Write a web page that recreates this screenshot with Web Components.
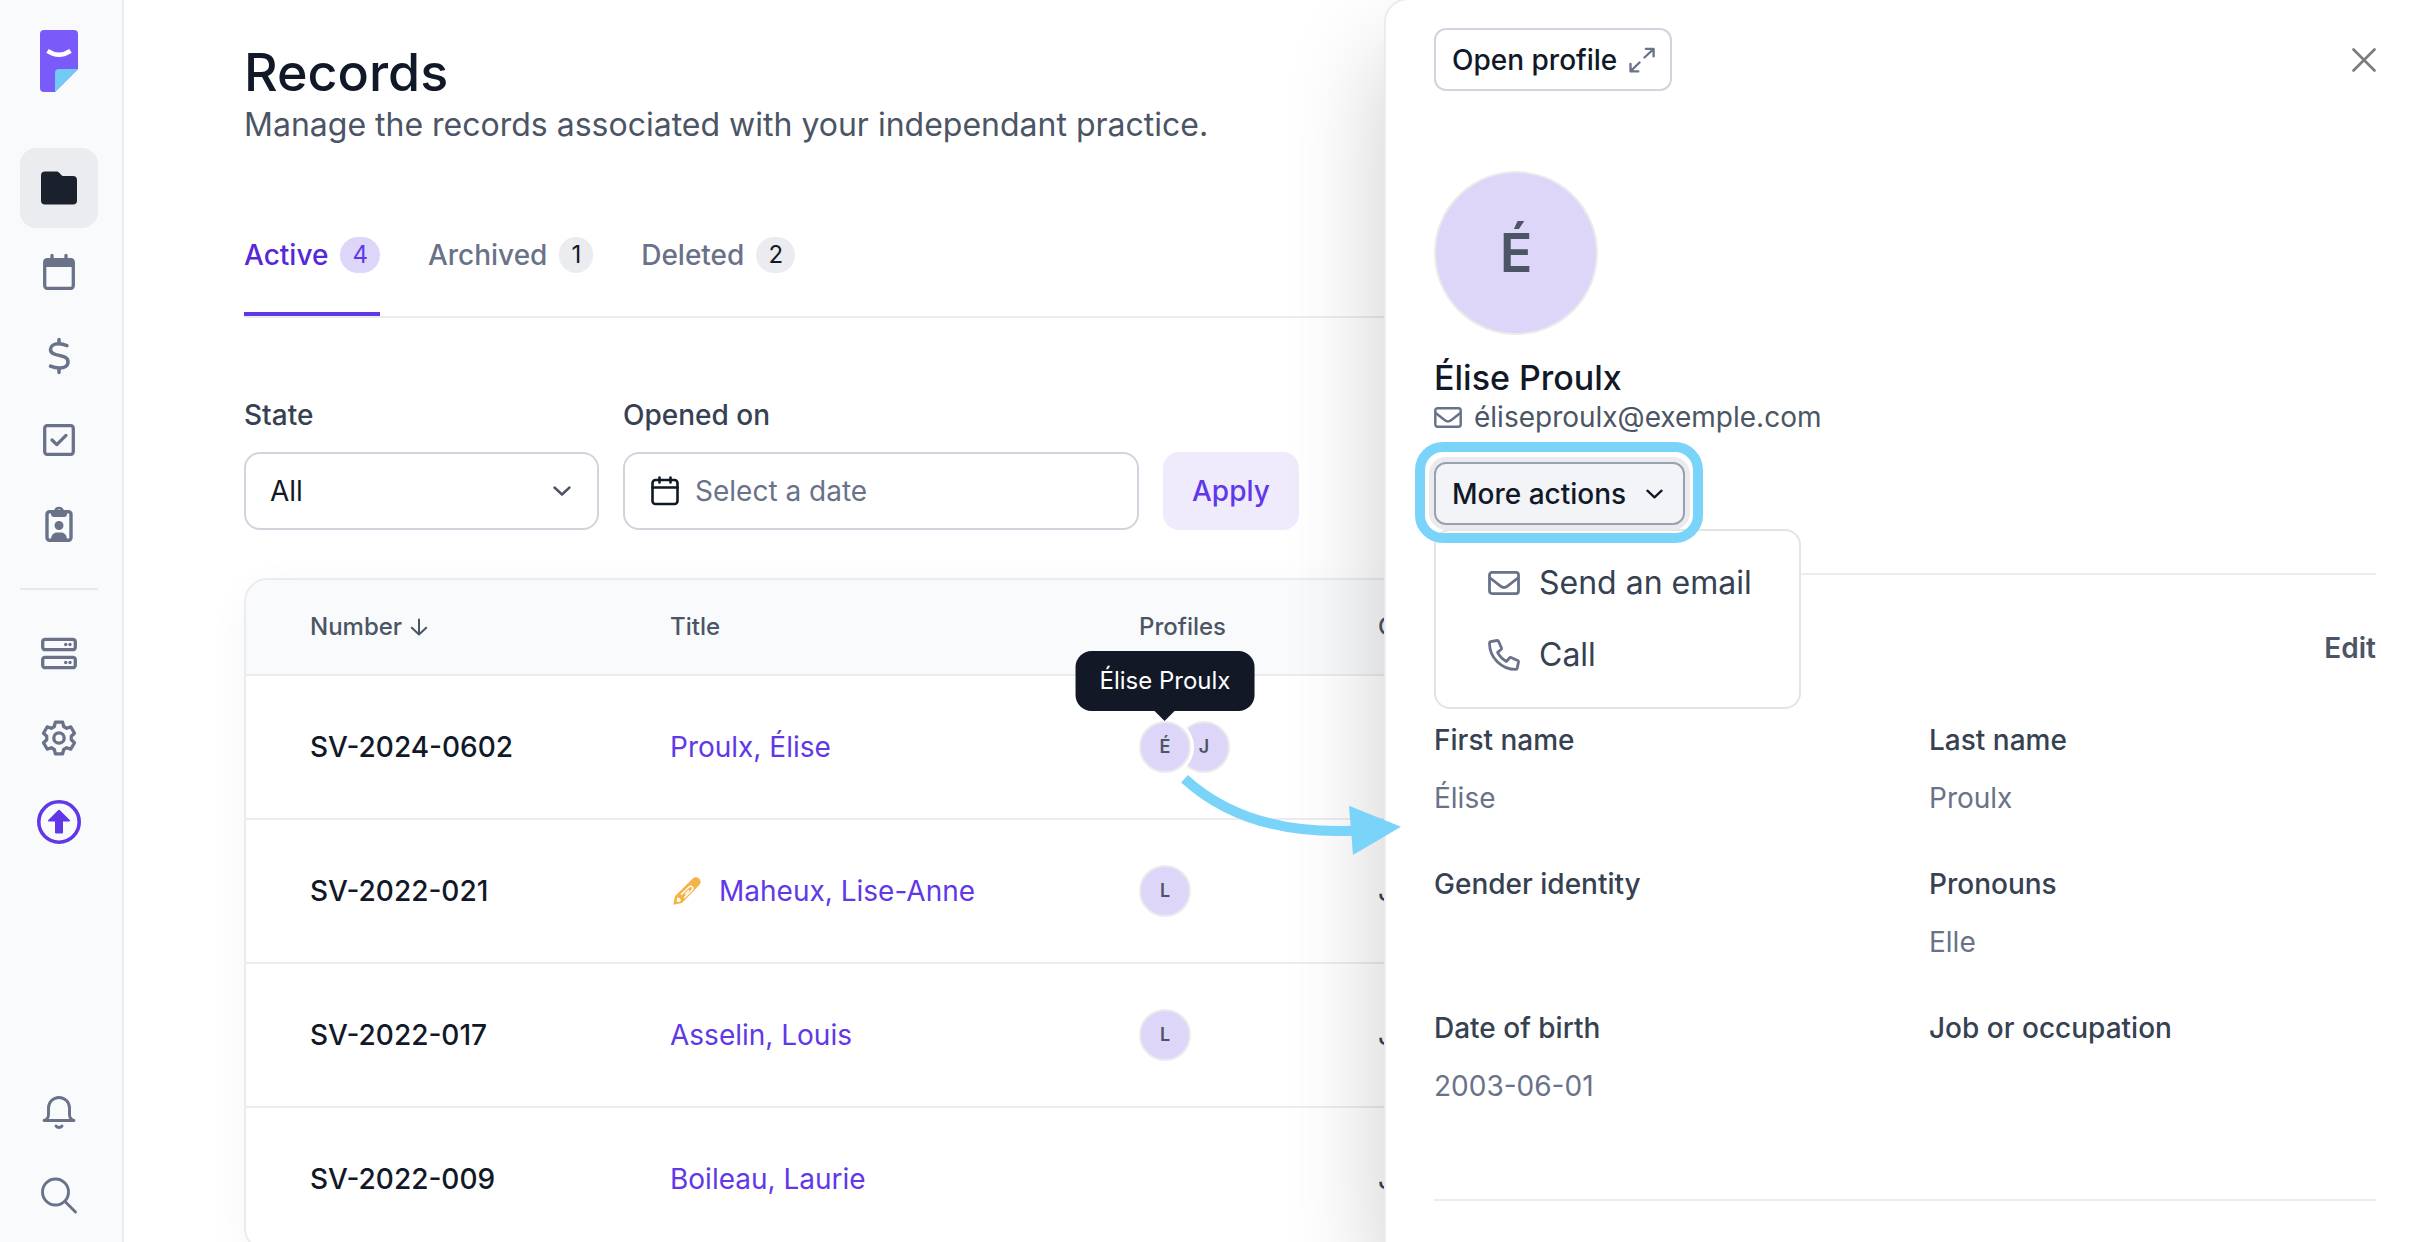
<!DOCTYPE html>
<html lang="en">
<head>
<meta charset="utf-8">
<title>Records</title>
<style>
  :root {
    --ink: #111827; --ink-2: #364152; --text: #4b5565; --muted: #697289;
    --brand: #6038e8; --brand-deep: #5528d8; --lilac: #ded6f9; --lilac-soft: #efebfc;
    --line: #ebebf0; --field: #d0d5dd; --surface: #f9fafc; --sky: #7ad3f9;
  }
  html, body { margin: 0; height: 100%; }
  body { font: 400 28px/40px Inter, "Liberation Sans", sans-serif; color: var(--ink); background: #fff; overflow: hidden; }
</style>
</head>
<body>
<app-shell>
  <side-nav slot="nav"></side-nav>
  <records-page></records-page>
  <profile-drawer slot="drawer"></profile-drawer>
  <callout-arrow slot="callout"></callout-arrow>
</app-shell>

<script>
const gear = (() => {
  const at = (deg, r) => {
    const a = (deg - 90) * Math.PI / 180;
    return (20 + r * Math.cos(a)).toFixed(2) + ' ' + (20 + r * Math.sin(a)).toFixed(2);
  };
  let pts = [];
  for (let k = 0; k < 6; k++) {
    const a = k * 60;
    pts.push(at(a - 22, 12.4), at(a - 13, 16.2), at(a + 13, 16.2), at(a + 22, 12.4));
  }
  return 'M' + pts.join('L') + 'Z';
})();

/* Each icon: [viewBox, markup] */
const ICONS = {
  logo: ['0 0 38 62', '<path fill="#7a5af8" d="M4 0h30a4 4 0 0 1 4 4v35L15 62H4a4 4 0 0 1-4-4V4a4 4 0 0 1 4-4z"/><path fill="#70caf5" d="M15 62V43a4 4 0 0 1 4-4h19z"/><path fill="none" stroke="#fff" stroke-width="4.4" d="M7.500 20.800Q19 28.500 30.500 20.800"/>'],
  folder: ['0 0 40 40', '<path fill="#1a202c" d="M6 3.500h11.500c1.400 0 2.200.6 3 1.500l1.500 1.700c.8.900 1.500 1.300 2.700 1.300H34a4 4 0 0 1 4 4v20.500a4 4 0 0 1-4 4H6a4 4 0 0 1-4-4v-25a4 4 0 0 1 4-4z"/>'],
  calendar: ['0 0 40 40', '<g fill="none" stroke="currentColor" stroke-width="3.300" stroke-linecap="round"><rect x="5.700" y="7.700" width="28.600" height="28.600" rx="2.500"/><path d="M13 3.500v4M27 3.500v4"/></g><path fill="currentColor" d="M5 7h30v8H5z"/>'],
  dollar: ['0 0 40 40', '<g fill="none" stroke="currentColor" stroke-width="3.500" stroke-linecap="round"><path d="M20 3.500v4M20 32.500v4"/><path d="M28 9.600C25 8.400 22 7.800 19.500 7.800c-5 0-8 2.200-8 5.600 0 4 4 5 8.500 6s9 2 9 6.600c0 4-3.600 6-8.500 6-3.500 0-6.500-.8-9-1.900"/></g>'],
  check: ['0 0 40 40', '<g fill="none" stroke="currentColor" stroke-width="3.300" stroke-linecap="round" stroke-linejoin="round"><rect x="5.700" y="5.700" width="28.600" height="28.600" rx="2.500"/><path d="M13 20l4.800 4.600 9.200-9.200"/></g>'],
  clipboard: ['0 0 40 40', '<rect x="8" y="7.700" width="24" height="28.600" rx="2.500" fill="none" stroke="currentColor" stroke-width="3.400"/><path fill="currentColor" fill-rule="evenodd" d="M12 6h3.200a5.200 5.200 0 0 1 9.600 0H28v4a3 3 0 0 1-3 3H15a3 3 0 0 1-3-3zM20 5.200a1.800 1.800 0 1 0 0 3.600 1.800 1.800 0 0 0 0-3.600zM20 17a4.500 4.500 0 1 1 0 9 4.500 4.500 0 0 1 0-9zM12 35.500c0-4.500 3-7 6-7h4c3 0 6 2.500 6 7z"/>'],
  server: ['0 0 40 40', '<g fill="none" stroke="currentColor" stroke-width="3.300"><rect x="3.700" y="5.300" width="32.600" height="10.400" rx="2.500"/><rect x="3.700" y="23.300" width="32.600" height="10.400" rx="2.500"/></g><g fill="currentColor"><circle cx="26.700" cy="10.500" r="1.700"/><circle cx="31" cy="10.500" r="1.700"/><circle cx="26.700" cy="28.500" r="1.700"/><circle cx="31" cy="28.500" r="1.700"/></g>'],
  gear: ['0 0 40 40', `<g fill="none" stroke="currentColor" stroke-width="3.300" stroke-linejoin="round"><path d="${gear}"/><circle cx="20" cy="20" r="5.200"/></g>`],
  upgrade: ['0 0 44 44', '<circle cx="22" cy="22" r="20.200" fill="none" stroke="#6038e8" stroke-width="3.600"/><path fill="#6038e8" stroke="#6038e8" stroke-width="2" stroke-linejoin="round" d="M22 10.800L32 20.600H25V32.400H19V20.600H12z"/>'],
  bell: ['0 0 40 40', '<g fill="none" stroke="currentColor" stroke-width="2.900" stroke-linecap="round" stroke-linejoin="round"><path d="M5 28.500C8.500 27.500 9.500 25.500 9.500 22.500V16a10.500 10.500 0 0 1 21 0v6.500c0 3 1 5 4.500 6z"/><path d="M17 34c1.600 2 4.400 2 6 0"/></g>'],
  search: ['0 0 40 40', '<g fill="none" stroke="currentColor" stroke-width="2.900" stroke-linecap="round"><circle cx="16.500" cy="16" r="13"/><path d="M26 25.500l10.500 10.500"/></g>'],
  chevron: ['0 0 18 10', '<path fill="none" stroke="currentColor" stroke-width="2.400" stroke-linecap="round" stroke-linejoin="round" d="M1.500 1.500L9 8.500l7.500-7"/>'],
  date: ['0 0 28 30', '<g fill="none" stroke="currentColor" stroke-width="2.600" stroke-linecap="round" stroke-linejoin="round"><rect x="1.500" y="4" width="25" height="24" rx="3"/><path d="M1.500 11.500h25M8.500 1.500v5M19.500 1.500v5"/></g>'],
  sort: ['0 0 18 18', '<path fill="none" stroke="currentColor" stroke-width="2" stroke-linecap="round" stroke-linejoin="round" d="M9 1.500v15M1.800 9.800L9 16.500l7.200-6.700"/>'],
  pencil: ['0 0 28 28', '<path fill="#f3b345" d="M.3 27.700L2 19 19.800 1.600c2-2 4.400-1.700 6.200 0 2 1.900 2.200 4.500.3 6.500L9 26z"/><path fill="#fff" d="M4.300 20.200l-.8 4.200 2.500.6 2-1.200-1-2.300z"/><path fill="none" stroke="#fff" stroke-width="1.500" stroke-linejoin="round" stroke-linecap="round" d="M11.500 20.500l7.300-7.200c1.300-1.300 1.300-2.600.4-3.500s-2.200-.9-3.500.4L8.500 17.300M12.600 16.700l3-3"/>'],
  expand: ['0 0 26 26', '<path fill="none" stroke="currentColor" stroke-width="2.300" stroke-linecap="round" stroke-linejoin="round" d="M15.500 10.500L24.500 2M16.800 1.800h7.800v7.600M10.500 15.500L1.800 24M1.500 16.800v7.600h7.800"/>'],
  close: ['0 0 24 24', '<path fill="none" stroke="#7b7b7b" stroke-width="2.600" stroke-linecap="round" d="M1.500 1.500l21 21M22.500 1.500l-21 21"/>'],
  mail: ['0 0 32 24', '<g fill="none" stroke="currentColor" stroke-width="2.800" stroke-linejoin="round"><rect x="1.500" y="1.400" width="29" height="21.200" rx="2.500"/><path d="M1.500 6.500l11 8.600c2.200 1.700 4.800 1.700 7 0l11-8.600"/></g>'],
  phone: ['0 0 32 32', '<path fill="none" stroke="currentColor" stroke-width="2.800" stroke-linejoin="round" d="M1.500 4.200c0-.8.400-1.300 1.100-1.500L9 1.500c.7-.1 1.200.1 1.500.8l3 6.700c.2.600.1 1.100-.4 1.500L9.600 13.400c2 4 5 7 9 9l2.900-3.500c.4-.5.9-.6 1.500-.4l6.700 3c.7.3.9.8.8 1.500l-1.300 6.300c-.2.700-.7 1.100-1.400 1.100C13.500 30.400 1.500 18.500 1.500 4.200z"/>']
};

function define(name, html) {
  customElements.define(name, class extends HTMLElement {
    constructor() { super(); this.attachShadow({ mode: 'open' }); }
    connectedCallback() {
      this.shadowRoot.innerHTML = typeof html === 'function' ? html(this) : html;
    }
  });
}

define('ui-icon', el => {
  const [box, markup] = ICONS[el.getAttribute('name')];
  return `<style>:host{display:inline-flex;flex:none}svg{display:block;width:var(--w,40px);height:var(--h,40px)}</style>
  <svg viewBox="${box}" aria-hidden="true">${markup}</svg>`;
});

define('app-shell', `<style>
  :host{display:flex;position:relative;height:100vh;overflow:hidden}
  main{flex:1;min-width:0}
</style><slot name="nav"></slot><main><slot></slot></main><slot name="drawer"></slot><slot name="callout"></slot>`);

define('nav-item', el => `<style>
  :host{display:block}
  a{display:flex;align-items:center;justify-content:center;height:80px;border-radius:16px;color:var(--muted);text-decoration:none}
  :host([active]) a{background:#ebecf0}
</style><a href="#" aria-label="${el.getAttribute('label')}"><slot></slot></a>`);

define('side-nav', `<style>
  :host{display:flex;flex-direction:column;flex:none;box-sizing:border-box;width:124px;padding:30px 24px 6px 20px;background:var(--surface);border-right:2px solid var(--line)}
  .logo{display:flex;justify-content:center;--w:38px;--h:62px;margin-bottom:56px}
  nav{display:flex;flex-direction:column;gap:4px}
  hr{width:100%;height:2px;border:0;margin:20px 0;background:#e8e9ed}
  .end{margin-top:auto}
  .up{--w:44px;--h:44px}
</style>
<a class="logo" href="#" aria-label="Home"><ui-icon name="logo"></ui-icon></a>
<nav aria-label="Main">
  <nav-item active label="Records"><ui-icon name="folder"></ui-icon></nav-item>
  <nav-item label="Calendar"><ui-icon name="calendar"></ui-icon></nav-item>
  <nav-item label="Billing"><ui-icon name="dollar"></ui-icon></nav-item>
  <nav-item label="Tasks"><ui-icon name="check"></ui-icon></nav-item>
  <nav-item label="Clients"><ui-icon name="clipboard"></ui-icon></nav-item>
  <hr>
  <nav-item label="Services"><ui-icon name="server"></ui-icon></nav-item>
  <nav-item label="Settings"><ui-icon name="gear"></ui-icon></nav-item>
  <nav-item label="Upgrade"><ui-icon class="up" name="upgrade"></ui-icon></nav-item>
</nav>
<nav class="end" aria-label="Tools">
  <nav-item label="Notifications"><ui-icon name="bell"></ui-icon></nav-item>
  <nav-item label="Search"><ui-icon name="search"></ui-icon></nav-item>
</nav>`);

define('tab-item', el => `<style>
  :host{display:block}
  button{all:unset;display:flex;align-items:center;gap:12px;padding-bottom:39px;border-bottom:4px solid transparent;font-weight:500;line-height:36px;color:var(--muted);cursor:pointer}
  span{padding:0 12px;border-radius:18px;background:#ebecf0;color:var(--ink);font-size:24px;font-weight:400}
  :host([active]) button{color:var(--brand-deep);border-color:var(--brand)}
  :host([active]) span{background:var(--lilac);color:var(--brand)}
</style><button role="tab" aria-selected="${el.hasAttribute('active')}"><slot></slot><span>${el.getAttribute('count')}</span></button>`);

define('filter-bar', `<style>
  :host{display:flex;align-items:flex-end;gap:24px}
  .field{display:flex;flex-direction:column;gap:17px}
  .state{width:355px}.date{width:516px}
  label{font-weight:500;color:var(--ink-2)}
  .box{display:flex;align-items:center;gap:16px;box-sizing:border-box;height:78px;padding:0 26px 0 24px;border:2px solid var(--field);border-radius:16px;background:#fff}
  .date .box{padding-left:26px}
  select,input{flex:1;min-width:0;height:100%;padding:0;border:0;outline:0;background:none;appearance:none;font:inherit;color:var(--ink)}
  input::placeholder{color:var(--muted);opacity:1}
  .chev{--w:18px;--h:10px;color:var(--text)}
  .cal{--w:28px;--h:30px}
  button{height:78px;padding:0 29px;border:0;border-radius:16px;background:var(--lilac-soft);color:var(--brand);font:inherit;font-weight:500}
</style>
<div class="field state"><label for="state">State</label>
  <div class="box"><select id="state"><option>All</option></select><ui-icon class="chev" name="chevron"></ui-icon></div></div>
<div class="field date"><label for="opened">Opened on</label>
  <div class="box"><ui-icon class="cal" name="date"></ui-icon><input id="opened" type="text" placeholder="Select a date"></div></div>
<button type="button">Apply</button>`);

define('user-avatar', `<style>
  :host{display:inline-flex;position:relative;align-items:center;justify-content:center;box-sizing:border-box;width:52px;height:52px;border:2px solid #ebebeb;border-radius:50%;background:var(--lilac);color:var(--text);font-size:18px;font-weight:600;line-height:1}
  :host([large]){width:164px;height:164px;font-size:54px}
</style><slot></slot><slot name="tip"></slot>`);

define('tool-tip', `<style>
  :host{position:absolute;left:50%;bottom:calc(100% + 12px);transform:translateX(-50%);padding:12px 24px;border-radius:16px;background:#131827;color:#fff;font-size:24px;font-weight:400;line-height:36px;white-space:nowrap}
  :host::after{content:"";position:absolute;left:50%;top:100%;margin-left:-10px;border:10px solid transparent;border-bottom:0;border-top-color:#131827}
</style><slot></slot>`);

define('records-table', `<style>
  :host{display:block;border:2px solid var(--line);border-radius:24px;background:#fff;box-shadow:0 10px 40px rgba(0,0,0,.04)}
  table{width:100%;table-layout:fixed;border-collapse:separate;border-spacing:0;text-align:left}
  .c1{width:392px}.c2{width:469px}.c3{width:239px}
  th,td{padding:0 0 0 32px;border-bottom:2px solid var(--line);white-space:nowrap}
  th:first-child,td:first-child{padding-left:64px}
  thead th{height:94px;background:var(--surface);font-size:24px;font-weight:500;color:var(--text)}
  thead th:first-child{border-top-left-radius:22px}
  thead th:last-child{border-top-right-radius:22px}
  tbody th,tbody td{height:142px;font-weight:400}
  tbody th{font-weight:500}
  tbody tr:last-child>*{border-bottom:0}
  .row{display:flex;align-items:center}
  .sort{gap:8px;--w:18px;--h:18px}
  .title{gap:18px;--w:28px;--h:28px}
  .title ui-icon{margin-left:3px}
  a{color:var(--brand);text-decoration:none}
  .who{color:var(--ink-2)}
  user-avatar+user-avatar{margin-left:-13px}
  .front{z-index:1;box-shadow:0 0 0 3px #fff}
</style>
<table>
  <colgroup><col class="c1"><col class="c2"><col class="c3"><col></colgroup>
  <thead><tr><th><div class="row sort">Number <ui-icon name="sort"></ui-icon></div></th><th>Title</th><th>Profiles</th><th>C</th></tr></thead>
  <tbody>
    <tr><th>SV-2024-0602</th><td><a href="#">Proulx, Élise</a></td><td><div class="row"><user-avatar class="front">É<tool-tip slot="tip" role="tooltip">Élise Proulx</tool-tip></user-avatar><user-avatar>J</user-avatar></div></td><td></td></tr>
    <tr><th>SV-2022-021</th><td><div class="row title"><ui-icon name="pencil"></ui-icon><a href="#">Maheux, Lise-Anne</a></div></td><td><div class="row"><user-avatar>L</user-avatar></div></td><td class="who">J</td></tr>
    <tr><th>SV-2022-017</th><td><a href="#">Asselin, Louis</a></td><td><div class="row"><user-avatar>L</user-avatar></div></td><td class="who">J</td></tr>
    <tr><th>SV-2022-009</th><td><a href="#">Boileau, Laurie</a></td><td></td><td class="who">J</td></tr>
  </tbody>
</table>`);

define('records-page', `<style>
  :host{display:block;padding:40px 120px}
  h1{margin:0;font-size:52px;line-height:66px;font-weight:500}
  p{margin:0;font-size:32px;line-height:38px;color:var(--text)}
  .tabs{display:flex;gap:48px;margin:93px 0 77px;border-bottom:2px solid var(--line)}
  records-table{margin-top:48px}
</style>
<h1>Records</h1>
<p>Manage the records associated with your independant practice.</p>
<div class="tabs" role="tablist">
  <tab-item active count="4">Active</tab-item>
  <tab-item count="1">Archived</tab-item>
  <tab-item count="2">Deleted</tab-item>
</div>
<filter-bar></filter-bar>
<records-table></records-table>`);

define('outline-button', `<style>
  :host{display:inline-block}
  button{display:flex;align-items:center;gap:12px;box-sizing:border-box;height:63px;padding:0 15px 0 16px;border:2px solid var(--field);border-radius:12px;background:#fff;color:var(--ink);font:inherit;font-weight:500}
  :host([pressed]) button{gap:20px;padding-right:20px;border-color:#97a1b3;background:#f2f4f8;box-shadow:0 0 0 5px #ebebed}
</style><button type="button"><slot></slot></button>`);

define('detail-field', el => `<style>
  :host{display:flex;flex-direction:column;gap:18px}
  dt{font-weight:500;color:var(--ink-2)}
  dd{margin:0;min-height:40px;color:var(--muted)}
</style><dt>${el.getAttribute('label')}</dt><dd><slot></slot></dd>`);

define('action-menu', `<style>
  :host{display:block;position:relative;width:max-content}
  ul{position:absolute;left:0;top:calc(100% + 4px);z-index:1;box-sizing:border-box;width:367px;margin:0;padding:16px 0;border:2px solid #e4e4e5;border-radius:16px;background:#fff;list-style:none}
  li button{all:unset;display:flex;align-items:center;gap:19px;box-sizing:border-box;width:100%;height:72px;padding-left:52px;font-size:32px;color:var(--ink-2);white-space:nowrap}
  li ui-icon{color:var(--muted)}
  outline-button{display:block;position:relative;z-index:2}
  .mail{--w:32px;--h:24px}.phone{--w:32px;--h:32px}.chev{--w:17px;--h:10px}
  .halo{position:absolute;inset:-20px -18px -18px -19px;z-index:3;border:10px solid var(--sky);border-radius:28px;pointer-events:none}
</style>
<outline-button pressed>More actions<ui-icon class="chev" name="chevron"></ui-icon></outline-button>
<ul>
  <li><button type="button"><ui-icon class="mail" name="mail"></ui-icon>Send an email</button></li>
  <li><button type="button"><ui-icon class="phone" name="phone"></ui-icon>Call</button></li>
</ul>
<div class="halo"></div>`);

define('profile-drawer', `<style>
  :host{position:absolute;top:-2px;right:0;bottom:0;box-sizing:border-box;width:1030px;max-width:100%;padding:28px 38px 0 48px;border:2px solid var(--line);border-right:0;border-bottom:0;border-top-left-radius:24px;background:#fff;box-shadow:0 50px 100px rgba(0,0,0,.2)}
  header{display:flex;align-items:center;justify-content:space-between;margin-bottom:80px}
  .close{all:unset;display:flex;--w:24px;--h:24px}
  .expand{--w:26px;--h:26px;color:var(--muted)}
  user-avatar{display:flex;margin-bottom:22px}
  h2{margin:0;font-size:34px;line-height:42px;font-weight:500}
  .email{display:flex;align-items:center;gap:12px;margin-bottom:27px;line-height:36px;color:var(--text);--w:28px;--h:21px}
  .email ui-icon{color:var(--muted)}
  hr{height:2px;margin:0;border:0;background:var(--line)}
  action-menu{margin-bottom:48px}
  .edit{display:block;margin:53px 0 52px auto;width:max-content;font-weight:600;color:var(--text);text-decoration:none}
  dl{display:grid;grid-template-columns:1fr 1fr;gap:46px 48px;margin:0 0 93px}
</style>
<header>
  <outline-button>Open profile<ui-icon class="expand" name="expand"></ui-icon></outline-button>
  <button class="close" type="button" aria-label="Close"><ui-icon name="close"></ui-icon></button>
</header>
<user-avatar large>É</user-avatar>
<h2>Élise Proulx</h2>
<div class="email"><ui-icon name="mail"></ui-icon>éliseproulx@exemple.com</div>
<action-menu></action-menu>
<hr>
<a class="edit" href="#">Edit</a>
<dl>
  <detail-field label="First name">Élise</detail-field>
  <detail-field label="Last name">Proulx</detail-field>
  <detail-field label="Gender identity"></detail-field>
  <detail-field label="Pronouns">Elle</detail-field>
  <detail-field label="Date of birth">2003-06-01</detail-field>
  <detail-field label="Job or occupation"></detail-field>
</dl>
<hr>`);

define('callout-arrow', `<style>
  :host{position:absolute;left:1180px;top:770px;pointer-events:none}
  svg{display:block}
</style>
<svg width="224" height="90" viewBox="0 0 224 90" aria-hidden="true">
  <path fill="none" stroke="#7ad3f9" stroke-width="10" d="M4.500 8.700C42 43 96 64 173 60.700"/>
  <path fill="#7ad3f9" d="M169 35.700L221 56.700 173 85z"/>
</svg>`);
</script>
</body>
</html>
